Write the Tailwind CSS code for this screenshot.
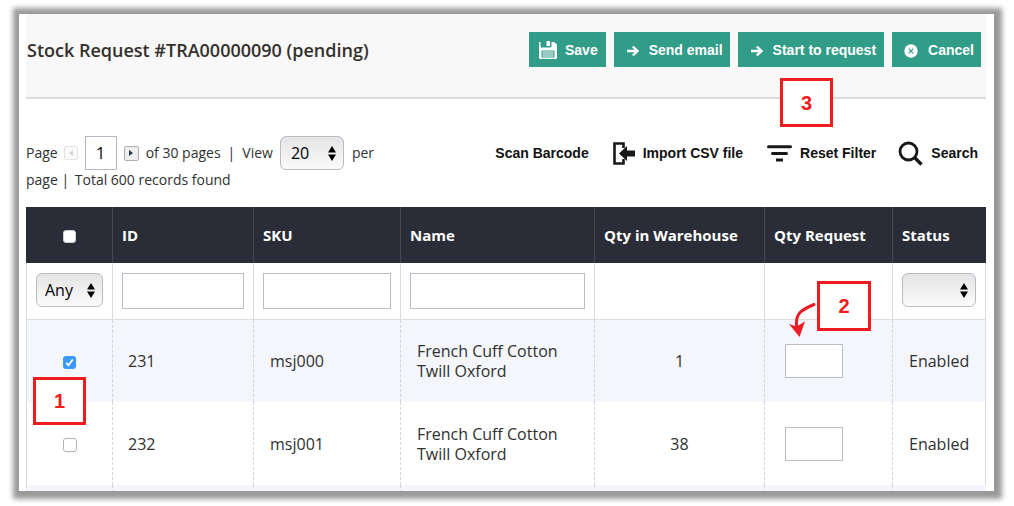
<!DOCTYPE html>
<html lang="en">
<head>
<meta charset="utf-8">
<meta name="viewport" content="width=device-width, initial-scale=1">
<title>Stock Request #TRA00000090</title>
<script src="https://cdn.jsdelivr.net/npm/@tailwindcss/browser@4"></script>
</head>
<body class="bg-white font-['Open_Sans',sans-serif] text-[#303030]">
<div class="flex h-screen pt-3.5 pr-5 pb-[15px] pl-[19px]">
<main class="flex-1 overflow-hidden bg-white pr-2 pl-[7px] shadow-[1px_1px_5px_7px_rgba(0,0,0,0.4)]">

  <header class="relative flex items-start justify-between border-b-2 border-[#dcdcdc] bg-[#f8f8f8] pt-[18px] pr-[5px] pb-[30px] pl-px">
    <h1 class="pt-1.5 text-[18px] leading-6 font-semibold text-[#33302b]">Stock Request #TRA00000090 (pending)</h1>
    <div class="flex gap-2 font-['Liberation_Sans',sans-serif] text-sm font-bold text-white">
      <button class="flex h-[35px] items-center gap-2 bg-[#319c87] pr-2 pl-2.5">
        <svg class="size-[18px]" viewBox="0 0 18 18" aria-hidden="true"><path fill="#fff" d="M0 1h1.500V5q0 1.500 1.500 1.500h8Q12.500 6.500 12.500 5V1H15l3 2.500V16.500Q18 18 16.500 18h-15Q0 18 0 16.500zM7.500 0H11v5H7.500z"/><path fill="#319c87" d="M2.500 9.500h13v7h-13z"/><path stroke="#fff" d="M3.500 11h11M3.500 13h11M3.500 15h11"/></svg>
        Save</button>
      <button class="flex h-[35px] items-center gap-2.5 bg-[#319c87] pr-[7px] pl-[13px]">
        <svg class="mt-0.5 h-3 w-3" viewBox="0 0 12 12" fill="none" stroke="#fff" stroke-width="2.400" aria-hidden="true"><path d="M0 6h10.500M5.800 1.500L10.500 6l-4.700 4.500"/></svg>
        Send email</button>
      <button class="flex h-[35px] items-center gap-2.5 bg-[#319c87] pr-2 pl-[13px]">
        <svg class="mt-0.5 h-3 w-3" viewBox="0 0 12 12" fill="none" stroke="#fff" stroke-width="2.400" aria-hidden="true"><path d="M0 6h10.500M5.800 1.500L10.500 6l-4.700 4.500"/></svg>
        Start to request</button>
      <button class="flex h-[35px] items-center gap-2.5 bg-[#319c87] pr-[7px] pl-3">
        <svg class="mt-0.5 size-[14px]" viewBox="0 0 14 14" aria-hidden="true"><circle cx="7" cy="7" r="6.700" fill="#fff"/><path stroke="#319c87" stroke-width="1.200" d="M4.700 4.700l4.600 4.600M9.300 4.700L4.700 9.300"/></svg>
        Cancel</button>
    </div>
    <span class="absolute top-16 right-[153px] z-10 flex h-[49px] w-[53px] items-center justify-center border-3 border-[#ee1c1c] bg-white font-['Liberation_Sans',sans-serif] text-xl font-bold text-[#ee1c1c]">3</span>
  </header>

  <section class="flex items-start justify-between pt-[37px] pr-2 pb-[17px] text-sm leading-5">
    <div>
      <div class="flex items-center">
        <label for="page">Page</label>
        <button aria-label="Previous page" disabled class="ml-1.5 flex size-[14px] items-center justify-center rounded-xs border border-[#e2e2e2] bg-[#fafafa]"><svg class="h-1.5 w-1" viewBox="0 0 4 6" aria-hidden="true"><path fill="#d4d4d4" d="M4 0v6L0 3z"/></svg></button>
        <input id="page" value="1" class="ml-[7px] h-[34px] w-8 border border-[#b5b7c2] text-center text-base text-black">
        <button aria-label="Next page" class="mr-[7px] ml-[7px] flex size-[15px] items-center justify-center rounded-xs border border-[#b0b0b0] bg-[#eeeeee]"><svg class="h-1.5 w-1" viewBox="0 0 4 6" aria-hidden="true"><path fill="#25344a" d="M0 0v6l4-3z"/></svg></button>
        <span>of 30 pages</span><span class="mx-[7px]">|</span><label for="view">View</label>
        <span class="relative mr-2 ml-[7px]">
          <select id="view" class="block h-[34px] w-16 appearance-none rounded-md border border-[#b9bbc5] bg-linear-to-b from-[#e4e4e4] to-[#fbfbfb] pl-2.5 text-base text-black"><option>20</option></select>
          <svg class="pointer-events-none absolute top-2.5 right-2 h-[15px] w-2" viewBox="0 0 8 15" aria-hidden="true"><path d="M4 0l4 6.500H0zM4 15l4-6.500H0z"/></svg>
        </span>
        <span>per</span>
      </div>
      <div>page | <span class="ml-0.5">Total 600 records found</span></div>
    </div>
    <div class="flex h-[34px] items-center font-['Liberation_Sans',sans-serif] text-sm font-bold text-[#111111]">
      <button>Scan Barcode</button>
      <button class="ml-6 flex items-center gap-2">
        <svg class="h-[23px] w-[22px]" viewBox="0 0 22 23" aria-hidden="true"><path fill="none" stroke="#1a1718" stroke-width="2.600" d="M10.500 6V1.500h-9v20h9V17"/><path fill="#1a1718" d="M6 11.500L14 4v4.500h8v6h-8V19z"/></svg>
        Import CSV file</button>
      <button class="ml-6 flex items-center gap-2">
        <svg class="h-[17px] w-[25px]" viewBox="0 0 25 17" fill="none" stroke="#1a1718" stroke-linecap="round" stroke-width="3" aria-hidden="true"><path d="M1.500 1.800h22M5.500 8.500h14"/><path stroke-linecap="butt" d="M9 15h7"/></svg>
        Reset Filter</button>
      <button class="ml-[22px] flex items-center gap-2">
        <svg class="size-[25px]" viewBox="0 0 25 25" fill="none" stroke="#1a1718" aria-hidden="true"><circle cx="10.500" cy="10.500" r="8.500" stroke-width="2.800"/><path stroke-width="3.400" d="M16.500 16.500l7 7"/></svg>
        Search</button>
    </div>
  </section>

  <table class="w-full table-fixed border-separate border-spacing-0 text-base leading-5">
    <thead>
      <tr class="h-14 bg-[#2a2d37] text-left text-[15px] text-white">
        <th class="w-[86px] text-center"><input type="checkbox" aria-label="Select all" class="size-[13px] appearance-none rounded-[3px] border border-[#d0d0d0] bg-white align-middle"></th>
        <th class="w-[141px] border-l border-[#464952] pl-[9px]">ID</th>
        <th class="w-[147px] border-l border-[#464952] pl-[9px]">SKU</th>
        <th class="w-[194px] border-l border-[#464952] pl-[9px]">Name</th>
        <th class="w-[170px] border-l border-[#464952] pl-[9px]">Qty in Warehouse</th>
        <th class="w-[128px] border-l border-[#464952] pl-[9px]">Qty Request</th>
        <th class="w-[94px] border-l border-[#464952] pl-[9px]">Status</th>
      </tr>
    </thead>
    <tbody>
      <tr class="h-[57px] *:border-b *:border-[#dcdcdf] *:px-[9px] *:pt-2.5 *:align-top">
        <td class="border-l"><div class="relative">
          <select aria-label="Filter by selection" class="block h-[34px] w-full appearance-none rounded-md border border-[#b9bbc5] bg-linear-to-b from-[#e4e4e4] to-[#fbfbfb] pl-2 text-base text-black"><option>Any</option></select>
          <svg class="pointer-events-none absolute top-2.5 right-2 h-[15px] w-2" viewBox="0 0 8 15" aria-hidden="true"><path d="M4 0l4 6.500H0zM4 15l4-6.500H0z"/></svg>
        </div></td>
        <td class="border-l"><input aria-label="Filter by ID" class="block h-9 w-full border border-[#b9bbc5]"></td>
        <td class="border-l"><input aria-label="Filter by SKU" class="block h-9 w-full border border-[#b9bbc5]"></td>
        <td class="border-l"><input aria-label="Filter by name" class="block h-9 w-full border border-[#b9bbc5]"></td>
        <td class="border-l"></td>
        <td class="border-l"></td>
        <td class="border-x"><div class="relative">
          <select aria-label="Filter by status" class="block h-[34px] w-full appearance-none rounded-md border border-[#b9bbc5] bg-linear-to-b from-[#e4e4e4] to-[#fbfbfb]"><option></option></select>
          <svg class="pointer-events-none absolute top-2.5 right-2 h-[15px] w-2" viewBox="0 0 8 15" aria-hidden="true"><path d="M4 0l4 6.500H0zM4 15l4-6.500H0z"/></svg>
        </div></td>
      </tr>
      <tr class="h-[82px] bg-[#f4f6fc]">
        <td class="relative border-l border-[#d6d8e4] text-center">
          <span class="relative inline-block size-[13px] align-middle"><input type="checkbox" checked aria-label="Select 231" class="block size-[13px] appearance-none rounded-[3px] bg-[#3b99fc]"><svg class="pointer-events-none absolute inset-0" viewBox="0 0 13 13" fill="none" stroke="#fff" stroke-width="1.800" aria-hidden="true"><path d="M3.300 6.800L5.500 9.300 9.800 3.500"/></svg></span>
          <span class="absolute top-[57px] left-1.5 z-10 flex h-12 w-[53px] items-center justify-center border-3 border-[#ee1c1c] bg-white font-['Liberation_Sans',sans-serif] text-xl font-bold text-[#ee1c1c]">1</span>
        </td>
        <td class="border-l border-dashed border-[#d3d5dc] pl-[15px]">231</td>
        <td class="border-l border-dashed border-[#d3d5dc] pl-4">msj000</td>
        <td class="border-l border-dashed border-[#d3d5dc] px-4">French Cuff Cotton Twill Oxford</td>
        <td class="border-l border-dashed border-[#d3d5dc] text-center">1</td>
        <td class="relative border-l border-dashed border-[#d3d5dc] pl-5">
          <input aria-label="Quantity for 231" class="block h-[34px] w-[58px] border border-solid border-[#b9bbc5] bg-white">
          <span class="absolute -top-[39px] left-[52px] z-10 flex h-[50px] w-[54px] items-center justify-center border-3 border-solid border-[#ee1c1c] bg-white font-['Liberation_Sans',sans-serif] text-xl font-bold text-[#ee1c1c]">2</span>
          <svg class="absolute -top-[18px] left-6 h-[35px] w-7" viewBox="0 0 28 35" aria-hidden="true"><path fill="none" stroke="#ee1c24" stroke-width="3" stroke-linecap="round" d="M25 2.500C12 8 6.500 11 7.500 24"/><path fill="#ee1c24" d="M0 22l7.500 2.500L16 19.500 10.500 35z"/></svg>
        </td>
        <td class="border-x border-r-[#dcdcdf] border-l-[#d3d5dc] pl-4 [border-left-style:dashed]">Enabled</td>
      </tr>
      <tr class="h-[83px] bg-white">
        <td class="border-l border-[#d6d8e4] text-center"><input type="checkbox" aria-label="Select 232" class="size-[14px] appearance-none rounded-[3px] border border-[#b4b4b4] bg-white align-middle"></td>
        <td class="border-l border-dashed border-[#d3d5dc] pl-[15px]">232</td>
        <td class="border-l border-dashed border-[#d3d5dc] pl-4">msj001</td>
        <td class="border-l border-dashed border-[#d3d5dc] px-4">French Cuff Cotton Twill Oxford</td>
        <td class="border-l border-dashed border-[#d3d5dc] text-center">38</td>
        <td class="border-l border-dashed border-[#d3d5dc] pl-5"><input aria-label="Quantity for 232" class="block h-[34px] w-[58px] border border-solid border-[#b9bbc5] bg-white"></td>
        <td class="border-x border-r-[#dcdcdf] border-l-[#d3d5dc] pl-4 [border-left-style:dashed]">Enabled</td>
      </tr>
      <tr class="h-[82px] bg-[#f4f6fc] *:border-l *:border-dashed *:border-[#d3d5dc]">
        <td></td><td></td><td></td><td></td><td></td><td></td><td></td>
      </tr>
    </tbody>
  </table>
</main>
</div>
</body>
</html>
